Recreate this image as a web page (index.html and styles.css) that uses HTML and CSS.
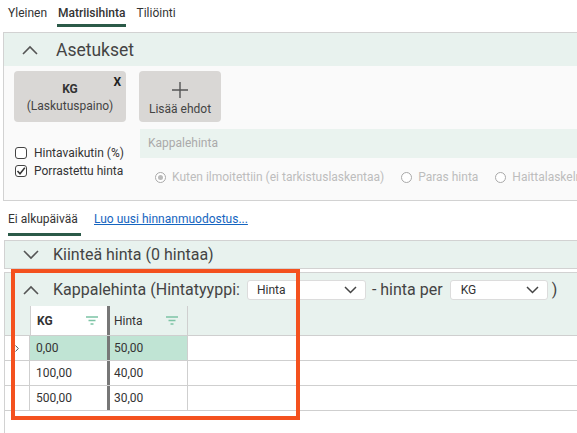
FILE: index.html
```html
<!DOCTYPE html>
<html lang="fi">
<head>
<meta charset="utf-8">
<link rel="stylesheet" href="styles.css">
</head>
<body>
<nav class="tabs">
  <span class="tab">Yleinen</span>
  <span class="tab active">Matriisihinta</span>
  <span class="tab">Tiliöinti</span>
</nav>

<section class="panel settings">
  <div class="panel-head">
    <svg class="chev" width="16" height="10" viewBox="0 0 16 10"><path d="M1 9 L8 2 L15 9" fill="none" stroke="#555" stroke-width="1.6"/></svg>
    <span class="head-title big">Asetukset</span>
  </div>
  <div class="settings-body">
    <div class="cards">
      <div class="card kg">
        <span class="close">X</span>
        <b class="card-main">KG</b>
        <span>(Laskutuspaino)</span>
      </div>
      <div class="card add">
        <svg width="16" height="16" viewBox="0 0 16 16"><path d="M8 0 V16 M0 8 H16" stroke="#555" stroke-width="1.4"/></svg>
        <span>Lisää ehdot</span>
      </div>
    </div>
    <div class="options">
      <div class="checks">
        <div class="check"><span class="box"></span>Hintavaikutin (%)</div>
        <div class="check"><span class="box"><svg width="10" height="10" viewBox="0 0 10 10"><path d="M1.5 5 L4 7.8 L8.8 1.8" fill="none" stroke="#333" stroke-width="1.5"/></svg></span>Porrastettu hinta</div>
      </div>
      <div class="pricing">
        <div class="pricing-bar">Kappalehinta</div>
        <div class="radios">
          <span class="radio"><span class="dot on"></span>Kuten ilmoitettiin (ei tarkistuslaskentaa)</span>
          <span class="radio"><span class="dot"></span>Paras hinta</span>
          <span class="radio last"><span class="dot"></span><span class="clip">Haittalaskelma</span></span>
        </div>
      </div>
    </div>
  </div>
</section>

<div class="subtabs">
  <span class="subtab active">Ei alkupäivää</span>
  <a class="link">Luo uusi hinnanmuodostus...</a>
</div>

<section class="panel fixed">
  <div class="panel-head small">
    <svg class="chev" width="16" height="10" viewBox="0 0 16 10"><path d="M1 1 L8 8 L15 1" fill="none" stroke="#555" stroke-width="1.6"/></svg>
    <span class="head-title">Kiinteä hinta (0 hintaa)</span>
  </div>
</section>

<section class="panel unit">
  <div class="highlight"></div>
  <div class="panel-head unit-head">
    <svg class="chev" width="16" height="10" viewBox="0 0 16 10"><path d="M1 9 L8 2 L15 9" fill="none" stroke="#555" stroke-width="1.6"/></svg>
    <span class="head-title">Kappalehinta (Hintatyyppi:</span>
    <span class="select sel-type">Hinta<svg width="13" height="8" viewBox="0 0 13 8"><path d="M1 1 L6.5 6.5 L12 1" fill="none" stroke="#444" stroke-width="1.5"/></svg></span>
    <span class="head-title">- hinta per</span>
    <span class="select sel-unit">KG<svg width="13" height="8" viewBox="0 0 13 8"><path d="M1 1 L6.5 6.5 L12 1" fill="none" stroke="#444" stroke-width="1.5"/></svg></span>
    <span class="head-title">)</span>
  </div>
  <div class="grid">
    <div class="ghead">
      <span class="ind"></span>
      <span class="hc c-kg">KG<svg class="filt" width="12" height="9" viewBox="0 0 12 9"><path d="M0 1 H12 M2.5 4.5 H9.5 M4.5 8 H7.5" stroke="#7cc4a5" stroke-width="1.3"/></svg></span>
      <span class="hc c-price">Hinta<svg class="filt" width="12" height="9" viewBox="0 0 12 9"><path d="M0 1 H12 M2.5 4.5 H9.5 M4.5 8 H7.5" stroke="#7cc4a5" stroke-width="1.3"/></svg></span>
    </div>
    <div class="grow sel">
      <span class="ind"><svg width="4" height="7" viewBox="0 0 4 7"><path d="M0.5 0.5 L3.3 3.5 L0.5 6.5" fill="none" stroke="#555" stroke-width="1"/></svg></span><span class="gc c-kg">0,00</span><span class="gc c-price">50,00</span><span class="gc rest"></span>
    </div>
    <div class="grow">
      <span class="ind"></span><span class="gc c-kg">100,00</span><span class="gc c-price">40,00</span><span class="gc rest"></span>
    </div>
    <div class="grow">
      <span class="ind"></span><span class="gc c-kg">500,00</span><span class="gc c-price">30,00</span><span class="gc rest"></span>
    </div>
  </div>
</section>
</body>
</html>
```

FILE: styles.css
```css
* { box-sizing: border-box; }
html, body { margin: 0; padding: 0; }
body {
  width: 577px;
  height: 433px;
  overflow: hidden;
  background: #fff;
  font-family: Roboto, "Liberation Sans", sans-serif;
  font-size: 12px;
  color: #333;
}

.tabs {
  display: flex;
  gap: 9px;
  padding-left: 7px;
  height: 32px;
}
.tab {
  padding: 6px 1px 0;
  height: 27px;
  color: #333;
}
.tab.active {
  font-weight: 500;
  border-bottom: 3px solid #2b5a48;
}

.panel {
  border: 1px solid #d2d2d2;
  border-right: none;
}
.panel-head {
  display: flex;
  align-items: center;
  background: #e8f2ee;
  color: #444;
}
.chev { margin-left: 18px; margin-right: 14px; flex: none; }
.head-title { font-size: 16px; white-space: nowrap; }
.head-title.big { font-size: 17.5px; }

.settings { margin-left: 3px; }
.settings .panel-head { height: 33px; }
.settings .chev { margin-right: 18px; }
.settings-body {
  background: #fafafa;
  height: 134px;
  overflow: hidden;
  padding-top: 5px;
}
.cards {
  display: flex;
  gap: 13px;
  padding-left: 10px;
}
.card {
  position: relative;
  height: 51px;
  background: #d9d7d5;
  border-radius: 4px;
  display: flex;
  flex-direction: column;
  align-items: center;
  justify-content: center;
  color: #444;
}
.card.kg { width: 112px; padding-top: 2px; }
.card-main { font-size: 12px; margin-bottom: 3px; color: #333; }
.close {
  position: absolute;
  right: 5px;
  top: 4px;
  font-weight: 700;
  font-size: 12px;
  color: #222;
}
.card.add { width: 82px; padding-top: 4px; }
.card.add svg { margin-bottom: 4px; }

.options {
  display: flex;
  margin-top: 7px;
}
.checks {
  width: 136px;
  flex: none;
  padding: 15px 0 0 11px;
}
.check {
  display: flex;
  align-items: center;
  height: 18px;
  white-space: nowrap;
  color: #333;
}
.box {
  width: 12px;
  height: 12px;
  border: 1.2px solid #444;
  border-radius: 3px;
  margin-right: 7px;
  display: flex;
  align-items: center;
  justify-content: center;
  background: #fff;
}
.pricing { flex: 1; min-width: 0; }
.pricing-bar {
  height: 29px;
  background: #eaf3ef;
  color: #aaa;
  padding: 7px 0 0 8px;
  white-space: nowrap;
}
.radios {
  display: flex;
  padding: 10px 0 0 15px;
  white-space: nowrap;
  color: #bdbdbd;
  overflow: hidden;
}
.radio {
  display: flex;
  align-items: center;
  height: 18px;
  margin-right: 17px;
  flex: none;
}
.radio.last { flex: 1; min-width: 0; margin-right: 0; }
.clip { overflow: hidden; min-width: 0; }
.dot {
  width: 11px;
  height: 11px;
  border: 1px solid #a9a9a9;
  border-radius: 50%;
  margin-right: 6px;
  display: flex;
  align-items: center;
  justify-content: center;
  background: #fff;
  flex: none;
}
.dot.on::after {
  content: "";
  width: 5px;
  height: 5px;
  border-radius: 50%;
  background: #bbb;
}

.subtabs {
  display: flex;
  align-items: flex-start;
  padding-left: 8px;
  height: 39px;
  padding-top: 11px;
}
.subtab {
  height: 24px;
  color: #333;
  border-bottom: 3px solid #2b5a48;
  width: 73px;
}
.link {
  margin-left: 13px;
  color: #1565c0;
  text-decoration: underline;
}

.fixed { margin-left: 4px; }
.fixed .panel-head { height: 27px; }

.unit {
  position: relative;
  margin-left: 4px;
  margin-top: 3px;
  border-bottom: none;
  height: 161px;
}
.unit-head { height: 33px; }
.unit-head .head-title { margin-right: 7px; }
.select {
  display: flex;
  align-items: center;
  justify-content: space-between;
  height: 20px;
  background: #fff;
  border: 1px solid #dcdcdc;
  border-radius: 3px;
  padding: 0 8px 0 9px;
  margin-right: 6px;
  font-size: 12px;
  color: #333;
}
.sel-type { width: 119px; }
.sel-unit { width: 98px; margin-right: 4px; padding-left: 10px; }

.grid { background: #fff; }
.ghead {
  display: flex;
  height: 29px;
  background: #e8f2ee;
}
.ghead .ind { border: none; }
.ind {
  width: 25px;
  flex: none;
  border-right: 1px solid #cfcfcf;
  padding: 9px 0 0 10px;
}
.ind svg { display: block; }
.hc {
  display: flex;
  align-items: center;
  justify-content: space-between;
  height: 29px;
  padding: 0 9px 0 6px;
  border-left: 1px solid #cfcfcf;
}
.hc.c-kg {
  width: 80px;
  background: #fff;
  font-weight: 700;
  border-right: 3px solid #777;
}
.hc.c-price {
  width: 78px;
  border-left: none;
  border-right: 1px solid #cfcfcf;
  background: #e8f2ee;
  padding-left: 4px;
}
.grow {
  display: flex;
  height: 25px;
  border-top: 1px solid #cfcfcf;
}
.grow:last-child { border-bottom: 1px solid #cfcfcf; height: 26px; }
.gc {
  height: 100%;
  padding: 5px 0 0 6px;
}
.gc.c-kg {
  width: 80px;
  border-right: 3px solid #777;
}
.gc.c-price {
  width: 78px;
  border-right: 1px solid #cfcfcf;
  padding-left: 4px;
}
.grow.sel .c-kg, .grow.sel .c-price { background: #c0e4d4; }
.gc.rest { flex: 1; }

.highlight {
  position: absolute;
  left: 6px;
  top: -4px;
  width: 289px;
  height: 151px;
  border: 4px solid #f4511e;
  pointer-events: none;
  z-index: 2;
}
```
